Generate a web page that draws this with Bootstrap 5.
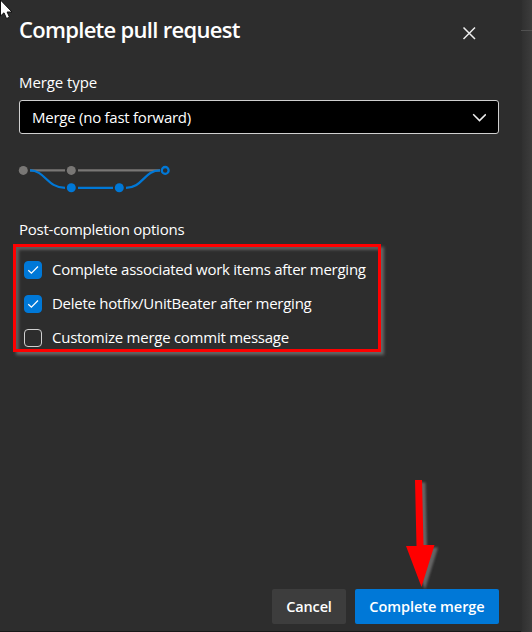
<!DOCTYPE html>
<html lang="en" data-bs-theme="dark">
<head>
<meta charset="utf-8">
<meta name="viewport" content="width=device-width, initial-scale=1">
<title>Complete pull request</title>
<link href="https://cdn.jsdelivr.net/npm/bootstrap@5.3.0/dist/css/bootstrap.min.css" rel="stylesheet">
<style>
body{height:632px;font-family:"Open Sans","Noto Sans",sans-serif;font-size:15px;line-height:20px;color:#fff;background:linear-gradient(90deg,#2b2b2b 521px,#303030 522px,#3c3c3c 532px);}
.panel{width:521px;height:632px;background:#2d2d2d;padding:0 22px 7px 19px;border-bottom:1px solid #191919}
.backdrop-line{left:521px;top:30px;width:11px;height:1px;background:#505050}
.panel-head{height:61px;padding:13px 23px 0 0}
.panel-title{font-size:22px;line-height:32px;font-weight:600;letter-spacing:-.71px;margin:0}
.close-btn{width:14px;height:14px;margin-top:13px}
.field-label{margin-top:11px;height:28px;letter-spacing:-.08px}
.merge-select{height:34px;width:480px;background:#000;border:1px solid #d0d0d0;border-radius:3px;padding:0 12px;color:#fff;font-size:15px;letter-spacing:-.25px}
.select-text{padding-bottom:1px}
.merge-graph{margin:26px 0 0 -4px;width:160px;height:38px;display:block}
.options-label{margin-top:21px;height:25px;letter-spacing:-.24px}
.options-box{margin-left:-6px;width:368px;height:108px;border:3px solid red;padding:14px 8px 0;box-shadow:3px 3px 3px #666,inset 3px 3px 3px #5c5c5c}
.option-row{height:18px;margin-bottom:16px;letter-spacing:-.26px;white-space:nowrap}
.option-text{padding-bottom:2px}
.option-row .form-check-input{width:18px;height:18px;margin:0 10px 0 0;border:1px solid #d0d0d0;border-radius:4px;background-color:transparent}
.option-row .form-check-input:checked{background-color:#0078d7;border-color:#0078d7;background-image:none}
.tick{left:0;top:0;width:18px;height:18px;pointer-events:none}
.action-row{gap:9px}
.action-btn{height:35px;padding:0;border:0;border-radius:2px;font-size:14.5px;font-weight:600;color:#fff}
.cancel-btn{width:74px;background:#3d3d3d;letter-spacing:-.15px}
.complete-btn{width:144px;background:#0078d7;letter-spacing:-.05px}
.pointer-arrow{left:400px;top:475px;width:45px;height:120px}
.cursor{left:0;top:0;width:13px;height:20px}
</style>
<script src="https://cdn.jsdelivr.net/npm/bootstrap@5.3.0/dist/js/bootstrap.bundle.min.js"></script>
</head>
<body class="position-relative overflow-hidden">
<main class="panel d-flex flex-column">
  <header class="panel-head d-flex justify-content-between align-items-start">
    <h1 class="panel-title">Complete pull request</h1>
    <button class="close-btn btn p-0 border-0 d-flex" aria-label="Close">
      <svg width="14" height="14" viewBox="0 0 14 14" fill="none" stroke="#eee" stroke-width="1.5"><path d="M1.5 1.5 13 13M13 1.5 1.5 13"/></svg>
    </button>
  </header>
  <div class="field-label">Merge type</div>
  <button class="merge-select d-flex align-items-center justify-content-between">
    <span class="select-text">Merge (no fast forward)</span>
    <svg width="14" height="9" viewBox="0 0 14 9" fill="none" stroke="#eee" stroke-width="1.5"><path d="M1.2 1.3 7.5 7.6 13.8 1.3"/></svg>
  </button>
  <svg class="merge-graph" viewBox="15 160 160 38" fill="none" stroke-width="2.2">
    <path d="M30 170.4H65M78 170.4H160" stroke="#797775"/>
    <path d="M30 170.4C45 170.4 47 187.8 65 187.8M78 187.8H113M126 187.8C143 187.8 144 170.4 160 170.4" stroke="#0078d7"/>
    <g fill="#797775"><circle cx="23.3" cy="170.4" r="4.5"/><circle cx="71.3" cy="170.4" r="4.5"/></g>
    <g fill="#0078d7"><circle cx="71.3" cy="187.8" r="4.5"/><circle cx="119.3" cy="187.8" r="4.5"/></g>
    <circle cx="165.2" cy="170.4" r="3.4" stroke="#0078d7" stroke-width="2.3"/>
  </svg>
  <div class="options-label">Post-completion options</div>
  <section class="options-box">
    <label class="option-row d-flex align-items-center position-relative"><input class="form-check-input" type="checkbox" checked><svg class="tick position-absolute" viewBox="0 0 18 18" fill="none" stroke="#fff" stroke-width="1.2"><path d="M4.3 9.2 7.4 12.2 14 5.5"/></svg><span class="option-text">Complete associated work items after merging</span></label>
    <label class="option-row d-flex align-items-center position-relative"><input class="form-check-input" type="checkbox" checked><svg class="tick position-absolute" viewBox="0 0 18 18" fill="none" stroke="#fff" stroke-width="1.2"><path d="M4.3 9.2 7.4 12.2 14 5.5"/></svg><span class="option-text">Delete hotfix/UnitBeater after merging</span></label>
    <label class="option-row d-flex align-items-center"><input class="form-check-input" type="checkbox"><span class="option-text">Customize merge commit message</span></label>
  </section>
  <footer class="action-row d-flex justify-content-end mt-auto">
    <button class="btn action-btn cancel-btn">Cancel</button>
    <button class="btn action-btn complete-btn">Complete merge</button>
  </footer>
</main>
<div class="backdrop-line position-absolute"></div>
<svg class="pointer-arrow position-absolute" viewBox="400 475 45 120">
  <defs><filter id="soft" x="-30%" y="-10%" width="180%" height="120%"><feGaussianBlur stdDeviation="1.2"/></filter></defs>
  <path d="M415 480H422L423.5 545H434.5L421.5 587 406 546H416.5Z" transform="translate(3.5 2.5)" fill="#777" opacity=".75" filter="url(#soft)"/>
  <path d="M415 480H422L423.5 545H434.5L421.5 587 406 546H416.5Z" fill="red"/>
</svg>
<svg class="cursor position-absolute" viewBox="0 0 13 20"><path d="M.5 0V16L4 12.8 6.5 18.5 9.5 17.2 7.1 12H12Z" fill="#fff" stroke="#111"/></svg>
</body>
</html>
